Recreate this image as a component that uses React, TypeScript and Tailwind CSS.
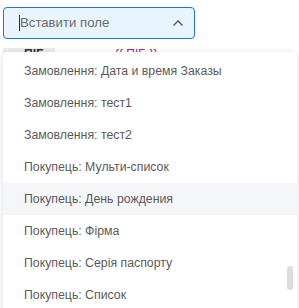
import React from "react";

const items = [
  "Замовлення: Дата и время Заказы",
  "Замовлення: тест1",
  "Замовлення: тест2",
  "Покупець: Мульти-список",
  "Покупець: День рождения",
  "Покупець: Фірма",
  "Покупець: Серія паспорту",
  "Покупець: Список",
];

export default function App() {
  return (
    <div
      className="relative w-[299px] h-[308px] overflow-hidden bg-white"
      style={{ fontFamily: '"Liberation Sans", Arial, sans-serif' }}
    >
      <div className="pt-[7px] pl-[3px]">
        <div className="flex h-[32px] w-[192px] items-center justify-between rounded-[4px] border border-[#1a73e8] bg-[#e8f5fe] pl-[15px] pr-[10px]">
          <div className="flex items-center">
            <span className="h-[16px] w-px bg-[#333]" />
            <span className="text-[13.2px] text-[#6b6b6b]">Вставити поле</span>
          </div>
          <svg width="12" height="8" viewBox="0 0 12 8" fill="none">
            <path d="M1.5 6.5 L6 2 L10.5 6.5" stroke="#555" strokeWidth="1.3" />
          </svg>
        </div>
        <div className="mt-[9px] flex h-[12px] items-start text-[12px] leading-[12px]">
          <div className="flex h-[12px] w-[52px] items-start bg-[#ececec] pl-[21px]">
            <span className="font-bold text-[#333]">ПІБ</span>
          </div>
          <span className="ml-[60px] text-[#a020a0]">{"{{ ПІБ }}"}</span>
        </div>
      </div>

      <div className="absolute left-[3px] top-[52px] w-[294px] rounded-[4px] bg-white py-[3px] shadow-[0_1px_6px_rgba(0,0,0,0.15)]">
        {items.map((t, i) => (
          <div
            key={t}
            className={`flex h-[32px] items-center pl-[21px] text-[12.3px] text-[#5a5a5a] ${
              i === 4 ? "bg-[#f5f6fa]" : ""
            }`}
          >
            {t}
          </div>
        ))}
        <div className="absolute right-[4px] top-[214px] h-[24px] w-[6px] rounded-full bg-[#dcdcdc]" />
      </div>
    </div>
  );
}
